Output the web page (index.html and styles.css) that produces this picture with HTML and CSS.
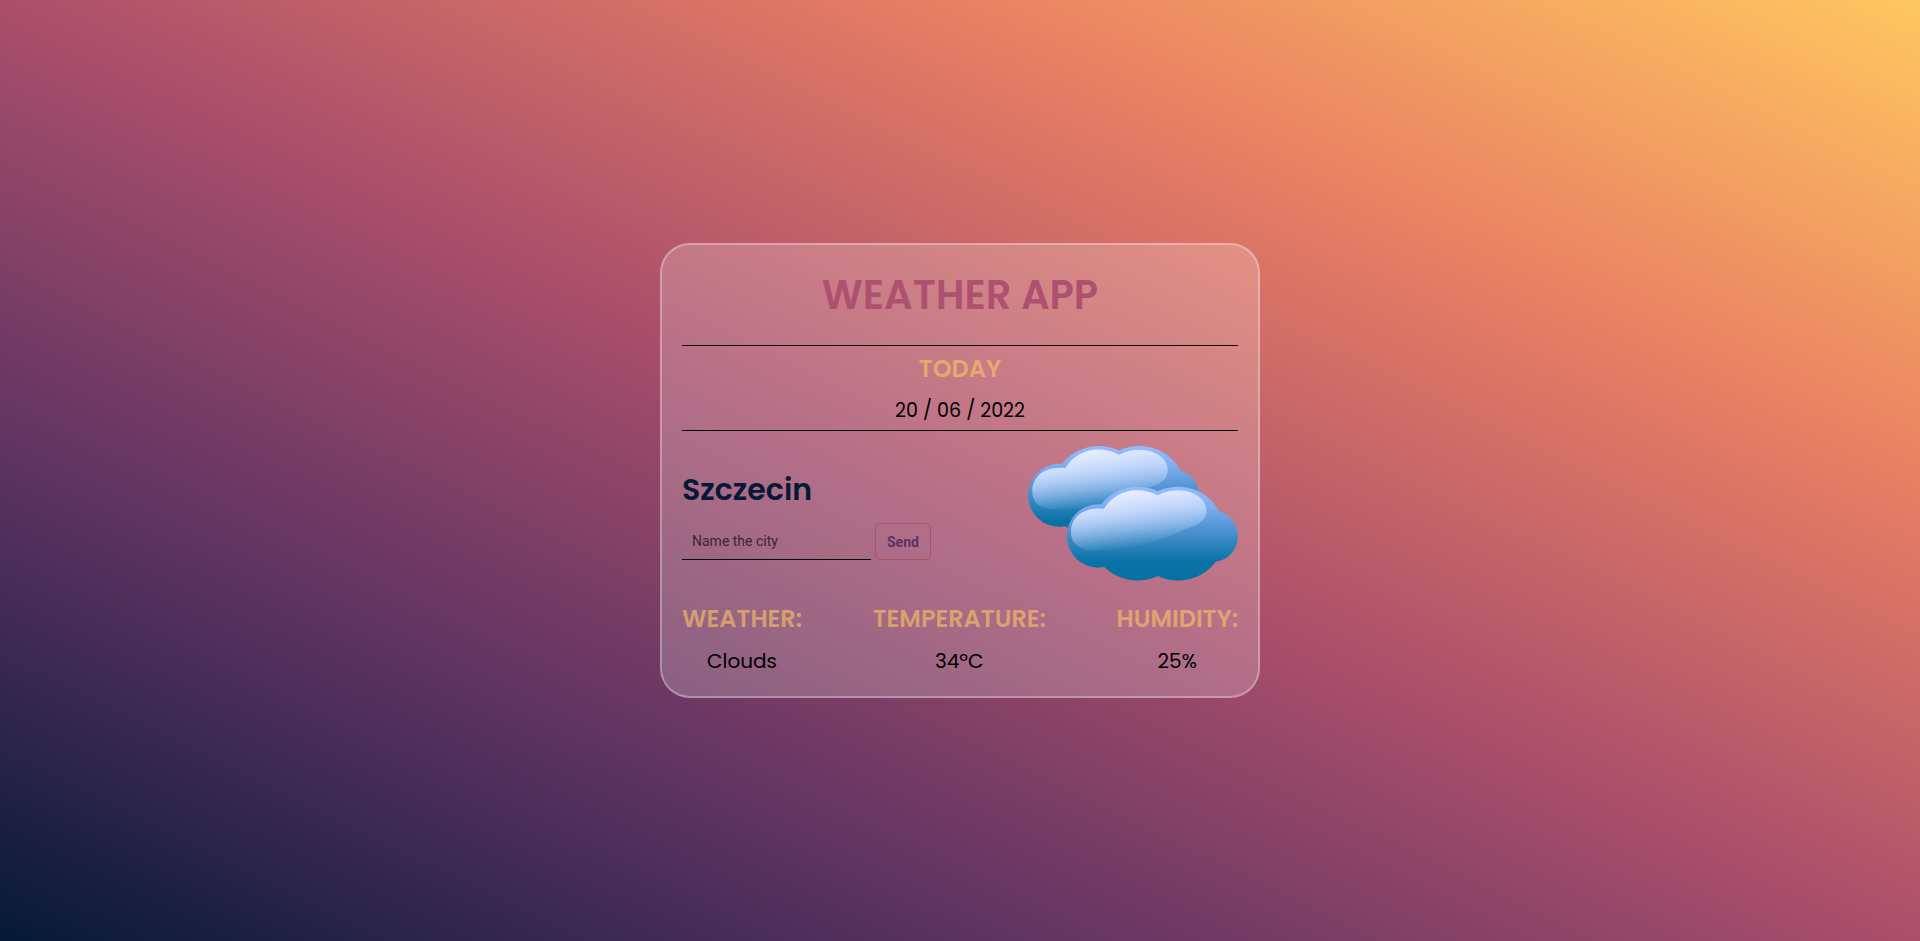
FILE: index.html
```html
<!DOCTYPE html>
<html lang="en">
<head>
<meta charset="utf-8">
<title>Weather App</title>
<link rel="stylesheet" href="styles.css">
</head>
<body>
<main class="card">
  <h1 class="title">WEATHER APP</h1>
  <section class="today">
    <h2 class="label">TODAY</h2>
    <p class="date">20 / 06 / 2022</p>
  </section>
  <section class="place">
    <div class="place-info">
      <h2 class="city">Szczecin</h2>
      <form class="search">
        <input class="search-input" type="text" placeholder="Name the city" aria-label="Name the city">
        <button class="search-button" type="button">Send</button>
      </form>
    </div>
    <svg class="clouds" viewBox="39 33 630 405" role="img" aria-label="Clouds">
      <defs>
        <linearGradient id="body" gradientUnits="userSpaceOnUse" x1="0" y1="155" x2="0" y2="438">
          <stop offset="0" stop-color="#96bbff"/>
          <stop offset=".2" stop-color="#80aef2"/>
          <stop offset=".48" stop-color="#4a91cf"/>
          <stop offset=".8" stop-color="#0872a4"/>
          <stop offset="1" stop-color="#0871a3"/>
        </linearGradient>
        <linearGradient id="shine" gradientUnits="userSpaceOnUse" x1="350" y1="165" x2="376" y2="335">
          <stop offset="0" stop-color="#ebf1ff"/>
          <stop offset=".3" stop-color="#cfdffd" stop-opacity=".95"/>
          <stop offset=".7" stop-color="#cfdffd" stop-opacity=".4"/>
          <stop offset="1" stop-color="#cfdffd" stop-opacity="0"/>
        </linearGradient>
        <g id="cloud">
          <g fill="url(#body)">
            <circle cx="250" cy="303" r="95"/>
            <circle cx="368" cy="296" r="141"/>
            <circle cx="489" cy="296" r="141"/>
            <circle cx="592" cy="304" r="77"/>
          </g>
          <path fill="url(#shine)" d="M168 290C168 250 200 215 267 221C300 168 365 150 428 181C475 158 525 162 558 190C582 213 582 253 543 270C470 298 390 346 243 346C195 346 168 328 168 290Z"/>
        </g>
      </defs>
      <use href="#cloud" transform="translate(-116 -122)"/>
      <use href="#cloud"/>
    </svg>
  </section>
  <section class="stats">
    <div class="stat"><h2 class="label">WEATHER:</h2><p class="value">Clouds</p></div>
    <div class="stat"><h2 class="label">TEMPERATURE:</h2><p class="value">34ºC</p></div>
    <div class="stat"><h2 class="label">HUMIDITY:</h2><p class="value">25%</p></div>
  </section>
</main>
</body>
</html>
```
FILE: styles.css
```css
* {
  box-sizing: border-box;
  margin: 0;
  padding: 0;
}

body {
  min-height: 100vh;
  display: flex;
  justify-content: center;
  align-items: center;
  font-family: Poppins, Inter, sans-serif;
  color: #000;
  background: linear-gradient(to top right, #051937, #5b3261, #ab4f6b, #e98163, #ffc75f);
}

.card {
  width: 600px;
  max-width: 100%;
  padding: 20px;
  border: 2px solid rgba(255, 255, 255, 0.3);
  border-radius: 30px;
  background: rgba(255, 255, 255, 0.2);
}

.title {
  padding-bottom: 20px;
  border-bottom: 1px solid #000;
  font-size: 40px;
  font-weight: 600;
  line-height: 60px;
  text-align: center;
  color: #ae5170;
}

.today {
  padding: 5px 0 3px;
  border-bottom: 1px solid #000;
  text-align: center;
}

.label {
  font-size: 24px;
  font-weight: 600;
  line-height: 36px;
  color: rgba(255, 199, 95, 0.6);
}

.date {
  padding-top: 8px;
  font-size: 19px;
  line-height: 32px;
}

.place {
  display: flex;
  justify-content: space-between;
  align-items: center;
  padding: 15px 0;
}

.city {
  font-size: 30px;
  font-weight: 600;
  line-height: 46px;
  color: #051937;
}

.search {
  display: flex;
  gap: 4px;
  padding-top: 10px;
}

.search-input {
  width: 189px;
  height: 37px;
  padding: 0 10px;
  border: 0;
  border-bottom: 1px solid #000;
  background: transparent;
  font-family: Roboto, sans-serif;
  font-size: 14px;
  color: #000;
}

.search-input::placeholder {
  color: #3f2531;
}

.search-button {
  height: 37px;
  padding: 0 11px;
  border: 1px solid #ae5170;
  border-radius: 5px;
  background: transparent;
  font-family: Roboto, sans-serif;
  font-size: 14px;
  font-weight: 700;
  color: #5c3262;
}

.clouds {
  width: 210px;
  height: 135px;
}

.stats {
  display: flex;
  justify-content: space-between;
  padding-top: 5px;
  text-align: center;
}

.value {
  padding-top: 9px;
  font-size: 20px;
  line-height: 30px;
}
```
